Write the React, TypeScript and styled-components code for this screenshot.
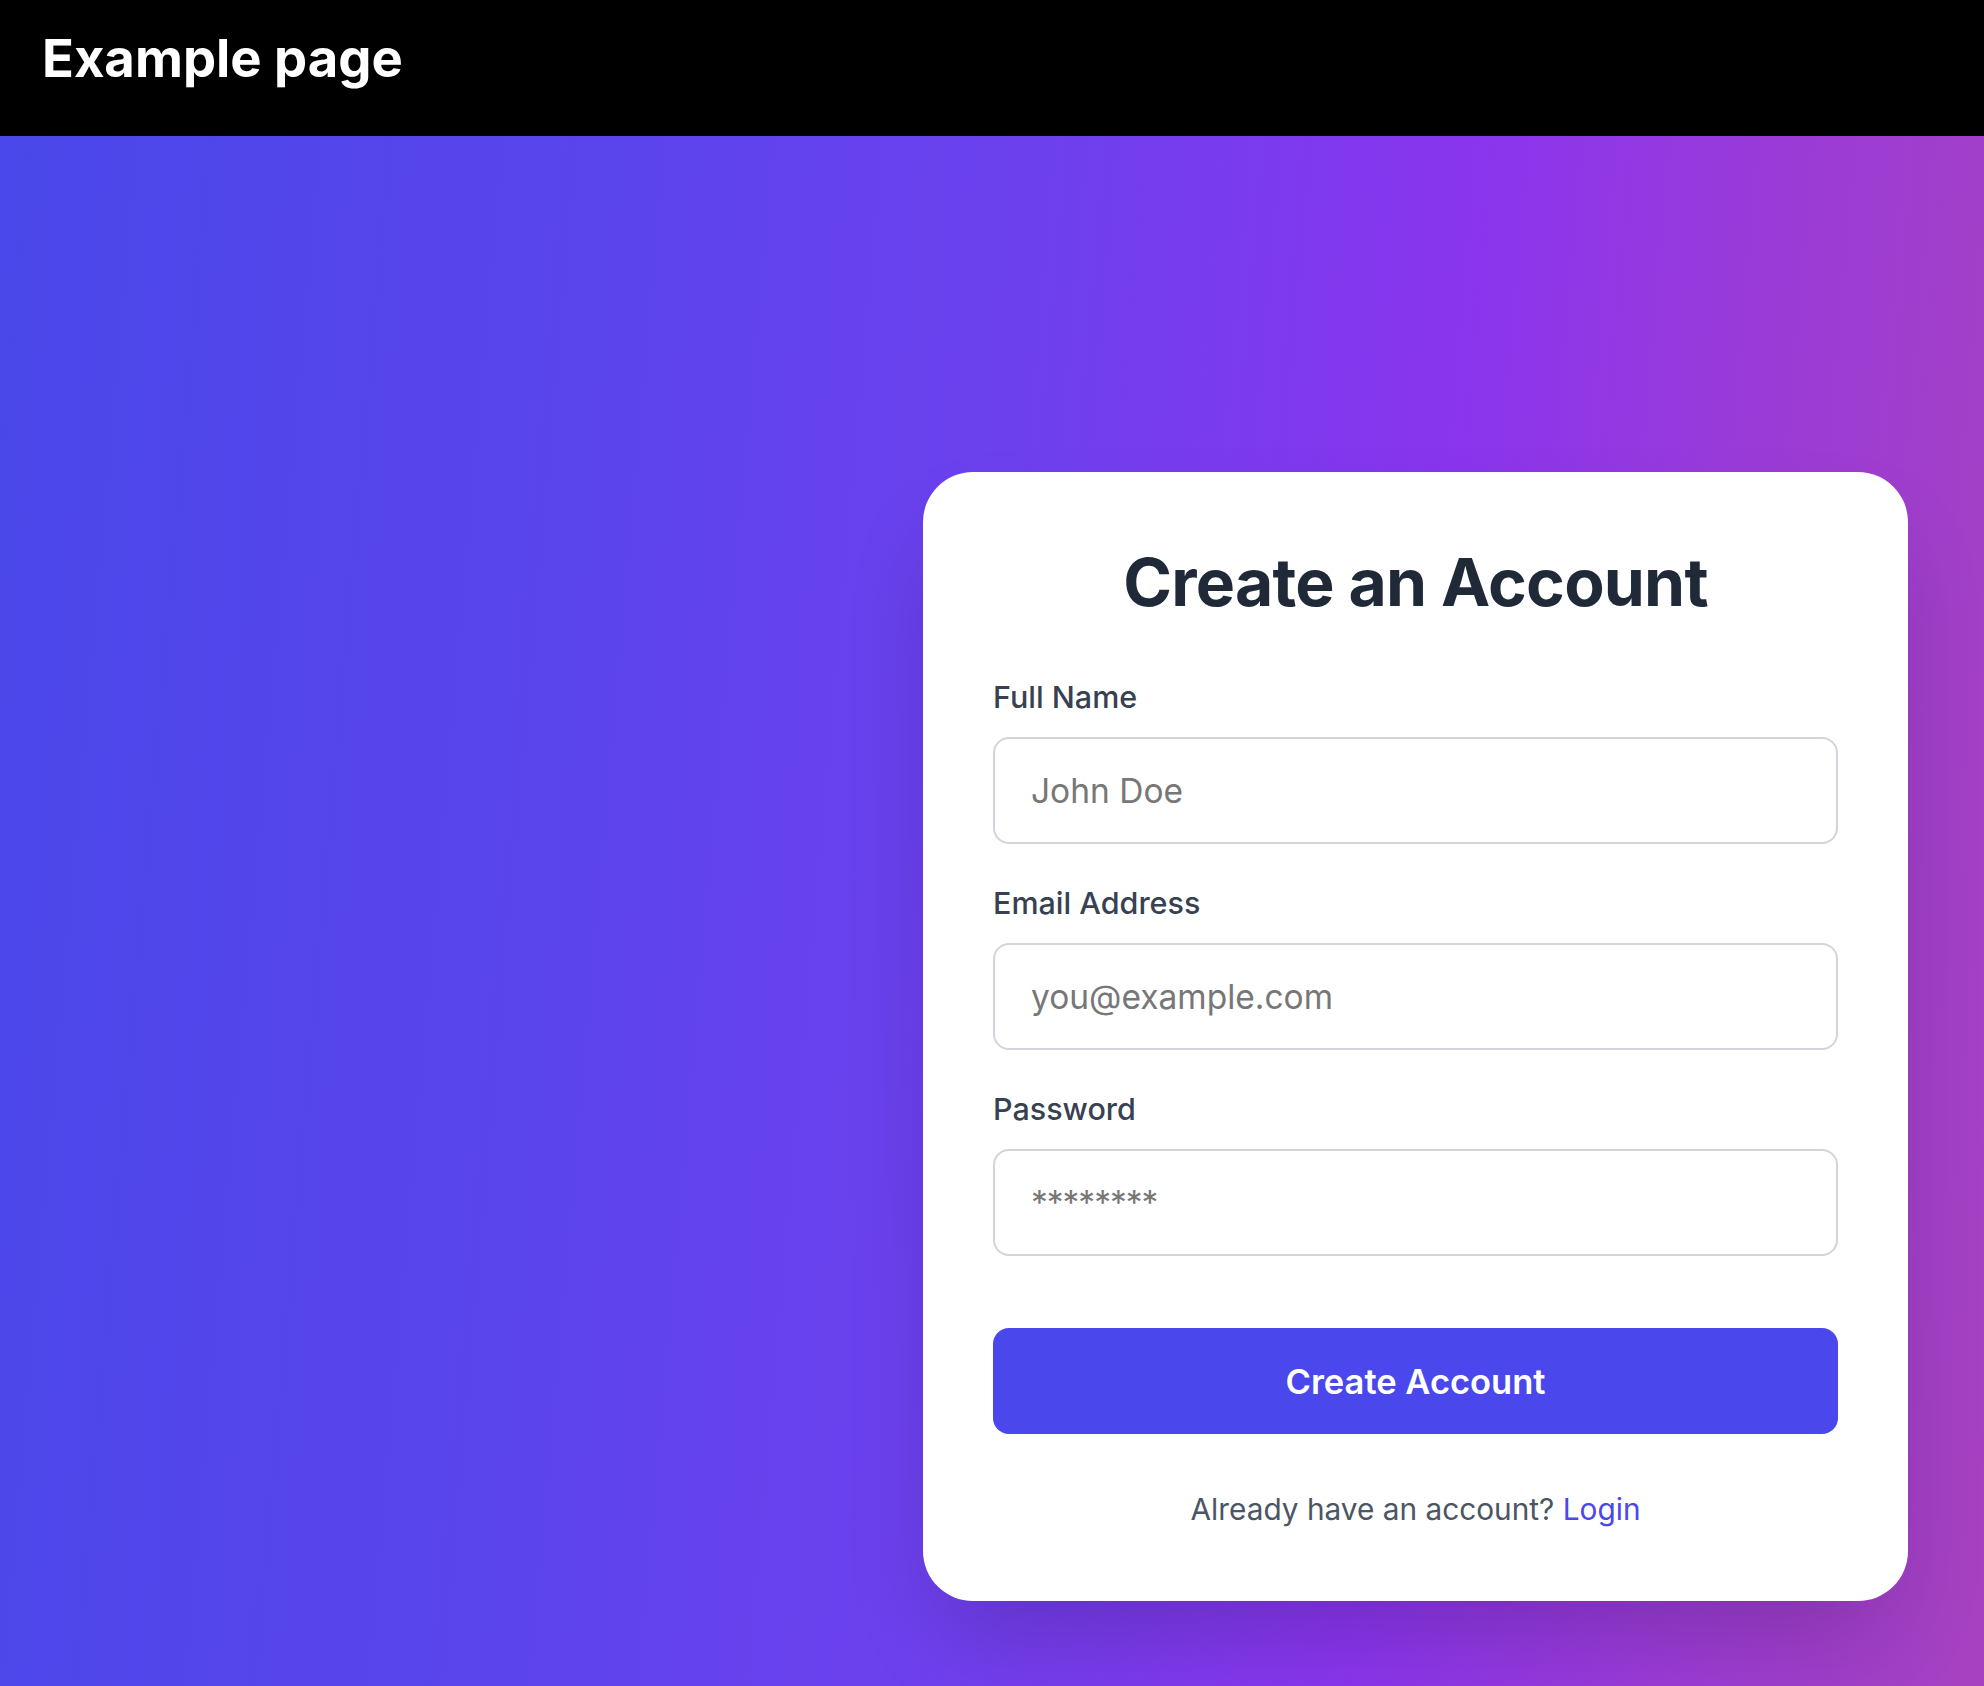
import React from "react";
import styled, { createGlobalStyle } from "styled-components";

const GlobalStyle = createGlobalStyle`
  html, body {
    margin: 0;
    padding: 0;
  }
  body {
    font-family: Inter, "Noto Sans", "Liberation Sans", sans-serif;
  }
  * {
    box-sizing: border-box;
  }
`;

const Page = styled.div`
  min-height: 100vh;
  display: flex;
  flex-direction: column;
`;

const Header = styled.header`
  height: 136px;
  background: #000;
  padding: 27px 0 0 42px;
  flex-shrink: 0;
`;

const HeaderTitle = styled.h1`
  margin: 0;
  font-size: 52.6px;
  line-height: 63px;
  font-weight: 700;
  color: #fff;
  letter-spacing: 0;
`;

const Main = styled.main`
  flex: 1;
  display: flex;
  justify-content: flex-end;
  align-items: flex-start;
  padding: 336px 76px 0 0;
  background: linear-gradient(
    95deg,
    #4a48ea 0%,
    #5b44ec 30%,
    #6e40ee 50%,
    #8a35ee 70%,
    #9a3bd8 84%,
    #a642c0 100%
  );
`;

const Card = styled.section`
  width: 985px;
  background: #fff;
  border-radius: 50px;
  padding: 70px 70px 72px;
  box-shadow: 0 50px 100px -24px rgba(0, 0, 0, 0.2);
  display: flex;
  flex-direction: column;
`;

const CardTitle = styled.h2`
  margin: 0 0 55px;
  text-align: center;
  font-size: 66px;
  line-height: 80px;
  font-weight: 700;
  color: #1f2937;
  letter-spacing: -0.8px;
`;

const Field = styled.div<{ $last?: boolean }>`
  display: flex;
  flex-direction: column;
  margin-bottom: ${(p) => (p.$last ? "72px" : "39px")};
`;

const Label = styled.label`
  font-size: 30.5px;
  line-height: 40px;
  font-weight: 500;
  color: #374151;
  margin-bottom: 20px;
`;

const Input = styled.input`
  height: 107px;
  width: 100%;
  border: 2px solid #d1d5db;
  border-radius: 16px;
  padding: 0 36px;
  font-family: inherit;
  font-size: 33.5px;
  color: #111827;
  background: #fff;
  outline: none;
  &::placeholder {
    color: #777777;
  }
  &[type="password"]::placeholder {
    letter-spacing: -1px;
  }
`;

const SubmitButton = styled.button`
  height: 106px;
  width: 100%;
  border: none;
  border-radius: 16px;
  background: #4a48ec;
  color: #fff;
  font-family: inherit;
  font-size: 34.5px;
  font-weight: 600;
  cursor: pointer;
`;

const Footer = styled.p`
  margin: 55px 0 0;
  text-align: center;
  font-size: 29.8px;
  line-height: 40px;
  color: #4b5563;
`;

const LoginLink = styled.a`
  color: #4a48ec;
  text-decoration: none;
`;

export default function App() {
  return (
    <>
      <GlobalStyle />
      <Page>
        <Header>
          <HeaderTitle>Example page</HeaderTitle>
        </Header>
        <Main>
          <Card>
            <CardTitle>Create an Account</CardTitle>
            <Field>
              <Label htmlFor="name">Full Name</Label>
              <Input id="name" type="text" placeholder="John Doe" />
            </Field>
            <Field>
              <Label htmlFor="email">Email Address</Label>
              <Input id="email" type="email" placeholder="you@example.com" />
            </Field>
            <Field $last>
              <Label htmlFor="password">Password</Label>
              <Input id="password" type="password" placeholder="********" />
            </Field>
            <SubmitButton type="button">Create Account</SubmitButton>
            <Footer>
              Already have an account? <LoginLink href="#">Login</LoginLink>
            </Footer>
          </Card>
        </Main>
      </Page>
    </>
  );
}
